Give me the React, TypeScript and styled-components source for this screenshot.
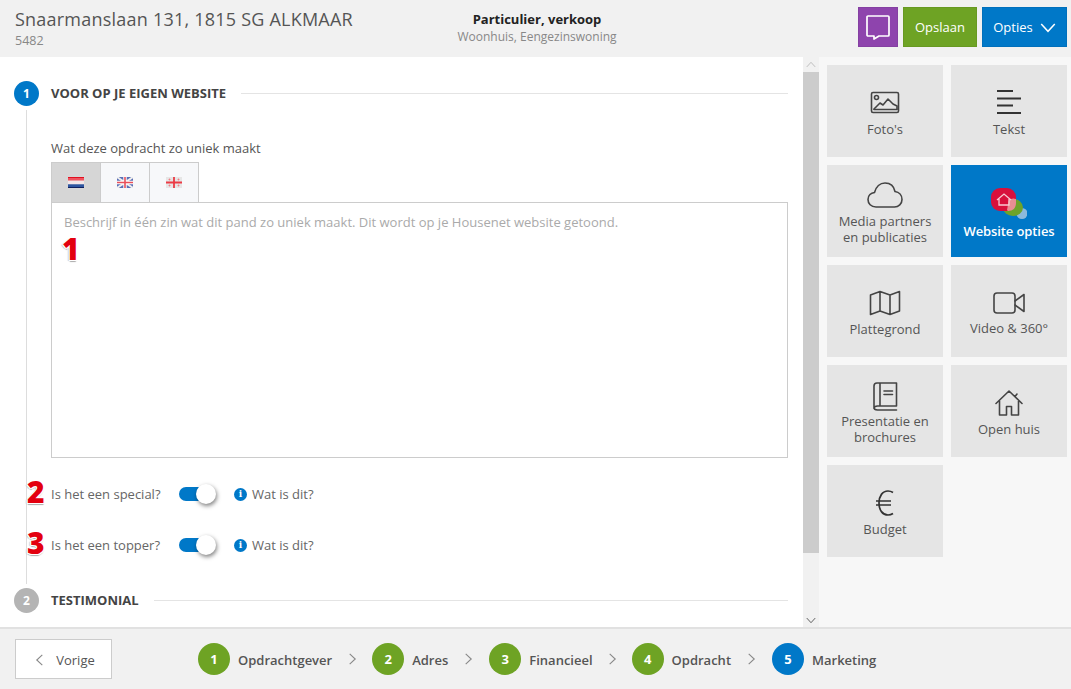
import React from 'react';
import styled, { createGlobalStyle } from 'styled-components';

const Global = createGlobalStyle`
  html, body { margin: 0; padding: 0; height: 100%; overflow: hidden; }
  body { font-family: "Open Sans", "Liberation Sans", sans-serif; color: #555; background: #fff; }
  * { box-sizing: border-box; }
`;

const Page = styled.div`display: flex; flex-direction: column; height: 689px; width: 1071px; position: relative; overflow: hidden;`;

const Header = styled.header`height: 57px; flex: none; background: #f1f1f1; display: grid; grid-template-columns: 1fr 1fr 1fr; padding: 7px 4px 0 15px;`;
const HeaderLeft = styled.div`display: flex; flex-direction: column;`;
const Address = styled.div`font-size: 18px; line-height: 24px; color: #555; letter-spacing: .22px; white-space: nowrap;`;
const RefNo = styled.div`font-size: 12.5px; line-height: 17px; color: #888; margin-top: 1px;`;
const HeaderCenter = styled.div`text-align: center; padding-top: 4px; margin-left: -8px;`;
const Kind = styled.div`font-size: 13px; font-weight: 700; line-height: 17px; color: #222;`;
const SubKind = styled.div`font-size: 12px; line-height: 17px; color: #888;`;
const HeaderRight = styled.div`display: flex; justify-content: flex-end; gap: 5px;`;
const HeadButton = styled.button<{ $bg: string; $w: number }>`
  width: ${p => p.$w}px; height: 40px; border: 1px solid rgba(0,0,0,.06); background: ${p => p.$bg}; color: #fff;
  font: 400 13px "Open Sans", sans-serif; padding: 0; display: flex; align-items: center; justify-content: center; gap: 7px;
`;

const Main = styled.main`flex: 1; display: flex; min-height: 0;`;
const Content = styled.section`width: 803px; flex: none; padding: 24px 15px 0 14px; overflow: hidden; background: #fff;`;
const StepHead = styled.div`display: flex; align-items: center; height: 25px;`;
const Bullet = styled.div<{ $bg: string }>`width: 25px; height: 25px; border-radius: 50%; background: ${p => p.$bg}; color: #fff; font-size: 12px; font-weight: 700; display: flex; align-items: center; justify-content: center; flex: none;`;
const StepTitle = styled.h2`margin: 0 15px 0 12px; padding-bottom: 2px; font-size: 13px; font-weight: 700; color: #444; white-space: nowrap;`;
const Rule = styled.div`flex: 1; height: 1px; background: #e4e4e4;`;
const StepBody = styled.div`margin: 4px 0 4px 12px; border-left: 1px solid #ddd; padding: 29px 0 27px 24px; height: 474px;`;
const FieldLabel = styled.div`font-size: 13px; line-height: 18px; color: #555; margin-bottom: 5px;`;
const Tabs = styled.div`display: flex; position: relative; z-index: 1;`;
const Tab = styled.div<{ $active?: boolean }>`
  width: 50px; height: 41px; border: 1px solid #ccc; margin-right: -1px; background: ${p => p.$active ? '#d6d6d6' : '#f7f8fa'};
  display: flex; align-items: center; justify-content: center;
`;
const TextBox = styled.textarea`
  display: block; width: 100%; height: 256px; margin: -1px 0 0; border: 1px solid #ccc; padding: 10px 12px; resize: none; outline: none;
  font: 400 13px/18px "Open Sans", sans-serif; background: #fff;
  &::placeholder { color: #aaa; opacity: 1; }
`;
const OptionRow = styled.div<{ $mt: number }>`display: flex; align-items: center; height: 24px; margin-top: ${p => p.$mt}px; font-size: 13px; color: #666;`;
const OptionLabel = styled.div`width: 128px; flex: none;`;
const Switch = styled.div`width: 26px; height: 14px; border-radius: 7px; background: #0078c8; position: relative; margin-right: 29px; flex: none;`;
const Knob = styled.div`position: absolute; left: 17px; top: -3px; width: 20px; height: 20px; border-radius: 50%; background: #fff; box-shadow: 1px 2px 4px rgba(0,0,0,.5);`;
const InfoDot = styled.div`width: 13px; height: 13px; border-radius: 50%; background: #0078c8; color: #fff; font: 700 9px/13px "DejaVu Serif", serif; text-align: center; margin-right: 5px; flex: none;`;

const Scroll = styled.div`width: 16px; flex: none; background: #f1f1f1; display: flex; flex-direction: column; align-items: center;`;
const ScrollArrow = styled.div`height: 15px; flex: none; display: flex; align-items: center; justify-content: center;`;
const Thumb = styled.div`width: 100%; height: 481px; background: #ccc; flex: none;`;
const ScrollTrack = styled.div`flex: 1;`;

const Side = styled.aside`flex: 1; background: #f7f7f7; padding: 8px 4px 0 8px; display: grid; grid-template-columns: 116px 116px; grid-auto-rows: 92px; gap: 8px;`;
const Tile = styled.div<{ $active?: boolean; $gap: number }>`
  background: ${p => p.$active ? '#0078c8' : '#e5e5e5'}; color: ${p => p.$active ? '#fff' : '#555'};
  font-size: 13px; line-height: 16px; font-weight: ${p => p.$active ? 600 : 400}; letter-spacing: ${p => p.$active ? '-.1px' : '0'}; text-align: center;
  display: flex; flex-direction: column; align-items: center; justify-content: center; padding: 5px 2px 0;
  svg { display: block; margin-bottom: ${p => p.$gap}px; }
`;

const Footer = styled.footer`height: 62px; flex: none; background: #f1f1f1; border-top: 2px solid #e1e1e1; display: flex; align-items: center; padding: 0 0 0 15px;`;
const PrevButton = styled.button`width: 97px; height: 40px; background: #fff; border: 1px solid #ccc; font: 400 13px "Open Sans", sans-serif; color: #555; display: flex; align-items: center; justify-content: center; gap: 10px; padding: 1px 0 0 2px; margin-right: 86px;`;
const StepItem = styled.div`display: flex; align-items: center; font-size: 13px; font-weight: 600; color: #555;`;
const StepText = styled.span`padding-top: 1px;`;
const StepDot = styled.div<{ $bg: string }>`width: 32px; height: 32px; border-radius: 50%; background: ${p => p.$bg}; color: #fff; font-size: 13px; font-weight: 700; display: flex; align-items: center; justify-content: center; margin-right: 8px;`;
const StepSep = styled.div<{ $l: number; $r: number }>`display: flex; margin: 0 ${p => p.$r}px 0 ${p => p.$l}px;`;

const Mark = styled.div<{ $x: number; $y: number }>`
  position: absolute; left: ${p => p.$x}px; top: ${p => p.$y}px; font: 800 30px/30px "Open Sans", sans-serif; color: #e3000f;
  text-shadow: 1px 0 #fff, -1px 0 #fff, 0 1px #fff, 0 -1px #fff, 1px 1px #fff, -1px 1px #fff, 0 2px 1px #aaa, -2px 1px 1px #ccc;
`;

const I = { fill: 'none', stroke: '#444', strokeWidth: 1.6, strokeLinecap: 'round', strokeLinejoin: 'round' } as const;

const Chevron = ({ dir = 'right', size = 12, color = '#888' }: { dir?: 'right' | 'left' | 'down' | 'up'; size?: number; color?: string }) => {
  const d = { right: 'M4 1l6 5.5L4 12', left: 'M9 1L3 6.5 9 12', down: 'M1 4l5.5 6L12 4', up: 'M1 9l5.5-6L12 9' }[dir];
  return <svg width={size} height={size} viewBox="0 0 13 13" fill="none" stroke={color} strokeWidth="1.2"><path d={d} /></svg>;
};

const NL = () => (
  <svg width="16" height="11" viewBox="0 0 16 11"><rect width="16" height="3.7" fill="#f0535f" /><rect y="3.7" width="16" height="3.6" fill="#f3e6e8" /><rect y="7.3" width="16" height="3.7" fill="#2d55a0" /><rect y="10" width="16" height="1" fill="#10205f" /><rect width="16" height="1" fill="#e01020" /></svg>
);
const UK = () => (
  <svg width="16" height="11" viewBox="0 0 16 11"><rect width="16" height="11" fill="#5a6fb5" /><path d="M0 0l16 11M16 0L0 11" stroke="#eee" strokeWidth="2" /><path d="M8 0v11M0 5.5h16" stroke="#fff" strokeWidth="3.4" /><path d="M8 0v11M0 5.5h16" stroke="#e8505a" strokeWidth="1.6" /></svg>
);
const GE = () => (
  <svg width="16" height="11" viewBox="0 0 16 11"><rect width="16" height="11" fill="#e6e6e6" /><path d="M8 0v11M0 5.5h16" stroke="#ec3b45" strokeWidth="1.8" /><path d="M3.5 1.5v2M2.5 2.5h2M12.5 1.5v2M11.5 2.5h2M3.5 7.500v2M2.5 8.5h2M12.5 7.500v2M11.5 8.5h2" stroke="#ef7a80" strokeWidth=".8" /></svg>
);

const PhotoIcon = () => (
  <svg width="30" height="23" viewBox="0 0 30 23" {...I}><rect x="1.5" y="1.5" width="27" height="20" rx="1.5" /><circle cx="6.5" cy="6.5" r="2" /><path d="M4 18l6-6 3 2 5-6 5 5 4 2v3" /><path d="M4 18.5h23" /></svg>
);
const TextIcon = () => (
  <svg width="24" height="24" viewBox="0 0 24 24" fill="none" stroke="#333" strokeWidth="1.8"><path d="M0 1h16M0 8.500h24M0 15.500h16M0 23h24" /></svg>
);
const CloudIcon = () => (
  <svg width="36" height="26" viewBox="0 0 36 26" {...I}><path d="M9 25C4 25 1 21.500 1 17.500S4 11 7.500 10.500C9 5 13 1 18 1c5.500 0 9 3.500 10 8.500 4 .5 7 3.500 7 8 0 4.500-3.500 7.500-7.500 7.500z" /></svg>
);
const MapIcon = () => (
  <svg width="32" height="26" viewBox="0 0 32 26" {...I}><path d="M1.500 5L11 1.500 21 5l9.500-3.500V21L21 24.500 11 21l-9.500 3.500zM11 1.500V21M21 5v19.500" /></svg>
);
const VideoIcon = () => (
  <svg width="32" height="22" viewBox="0 0 32 22" {...I}><rect x="1" y="1" width="21" height="20" rx="3" /><path d="M22 9l9-6.500v17L22 13" /></svg>
);
const BookIcon = () => (
  <svg width="25" height="29" viewBox="0 0 25 29" {...I}><path d="M4 1h19.500v23H4.500C2.500 24 1 25 1 26.500V4c0-2 1.500-3 3-3zM7 1v23M1 25.500C1 27 2.500 28 4.500 28h19" /><path d="M11 9h8.500M11 12.500h8.500" /></svg>
);
const HouseIcon = () => (
  <svg width="28" height="26" viewBox="0 0 28 26" {...I}><path d="M1 13.500L14 1l13 12.500M4.500 11v14h7v-8.500h5V25h7V11M20 6.500L22 4" /></svg>
);
const EuroIcon = () => (
  <svg width="18" height="26" viewBox="0 0 18 26" fill="none" stroke="#333" strokeWidth="1.7"><path d="M17 2.500C15.500 1.500 14 1 12 1 6.500 1 3 6 3 13s3.500 12 9 12c2 0 3.500-.5 5-1.500M0 11h15M0 15h15" /></svg>
);
const SiteLogo = () => (
  <svg width="36" height="31" viewBox="0 0 36 31">
    <circle cx="31" cy="25.500" r="5.500" fill="#8cb9dc" />
    <ellipse cx="22" cy="19.500" rx="10" ry="8.500" fill="#6ea32a" />
    <rect x="0" y="0" width="25" height="23" rx="9" fill="#d8103c" />
    <path d="M18 12a7 7 0 0 1 7-1v4c0 5-3 8-8 8a10 10 0 0 1-1-1c1-4 1-8 2-10z" fill="#e88e92" />
    <path d="M6 12l7-6 7 6M8 11v6h10v-6" fill="none" stroke="#f7c9d2" strokeWidth="1.300" />
  </svg>
);

const tiles: { label: React.ReactNode; icon: React.ReactNode; active?: boolean; gap: number }[] = [
  { label: "Foto's", icon: <PhotoIcon />, gap: 7 },
  { label: 'Tekst', icon: <TextIcon />, gap: 7 },
  { label: <>Media partners<br />en publicaties</>, icon: <CloudIcon />, gap: 5 },
  { label: 'Website opties', icon: <SiteLogo />, active: true, gap: 4 },
  { label: 'Plattegrond', icon: <MapIcon />, gap: 5 },
  { label: 'Video & 360°', icon: <VideoIcon />, gap: 6 },
  { label: <>Presentatie en<br />brochures</>, icon: <BookIcon />, gap: 2 },
  { label: 'Open huis', icon: <HouseIcon />, gap: 5 },
  { label: 'Budget', icon: <EuroIcon />, gap: 5 },
];

const steps = [
  { n: 1, label: 'Opdrachtgever', l: 14, r: 14 },
  { n: 2, label: 'Adres', l: 14, r: 15 },
  { n: 3, label: 'Financieel', l: 13, r: 14 },
  { n: 4, label: 'Opdracht', l: 14, r: 15 },
  { n: 5, label: 'Marketing', l: 0, r: 0 },
];

export default function App() {
  return (
    <Page>
      <Global />
      <Header>
        <HeaderLeft>
          <Address>Snaarmanslaan 131, 1815 SG ALKMAAR</Address>
          <RefNo>5482</RefNo>
        </HeaderLeft>
        <HeaderCenter>
          <Kind>Particulier, verkoop</Kind>
          <SubKind>Woonhuis, Eengezinswoning</SubKind>
        </HeaderCenter>
        <HeaderRight>
          <HeadButton $bg="#8e44ad" $w={40}>
            <svg width="26" height="26" viewBox="0 0 26 26" fill="none" stroke="#fff" strokeWidth="1.700" strokeLinejoin="round"><path d="M3 2h20a1 1 0 0 1 1 1v18a1 1 0 0 1-1 1h-9l-5 3v-3H3a1 1 0 0 1-1-1V3a1 1 0 0 1 1-1z" /></svg>
          </HeadButton>
          <HeadButton $bg="#6ea324" $w={74}>Opslaan</HeadButton>
          <HeadButton $bg="#0078c8" $w={85}>Opties <Chevron dir="down" size={16} color="#fff" /></HeadButton>
        </HeaderRight>
      </Header>
      <Main>
        <Content>
          <StepHead>
            <Bullet $bg="#0078c8">1</Bullet>
            <StepTitle>VOOR OP JE EIGEN WEBSITE</StepTitle>
            <Rule />
          </StepHead>
          <StepBody>
            <FieldLabel>Wat deze opdracht zo uniek maakt</FieldLabel>
            <Tabs>
              <Tab $active><NL /></Tab>
              <Tab><UK /></Tab>
              <Tab><GE /></Tab>
            </Tabs>
            <TextBox placeholder="Beschrijf in één zin wat dit pand zo uniek maakt. Dit wordt op je Housenet website getoond." />
            <OptionRow $mt={24}>
              <OptionLabel>Is het een special?</OptionLabel>
              <Switch><Knob /></Switch>
              <InfoDot>i</InfoDot>
              Wat is dit?
            </OptionRow>
            <OptionRow $mt={27}>
              <OptionLabel>Is het een topper?</OptionLabel>
              <Switch><Knob /></Switch>
              <InfoDot>i</InfoDot>
              Wat is dit?
            </OptionRow>
          </StepBody>
          <StepHead>
            <Bullet $bg="#b4b4b4">2</Bullet>
            <StepTitle>TESTIMONIAL</StepTitle>
            <Rule />
          </StepHead>
        </Content>
        <Scroll>
          <ScrollArrow><Chevron dir="up" size={10} color="#bbb" /></ScrollArrow>
          <Thumb />
          <ScrollTrack />
          <ScrollArrow><Chevron dir="down" size={10} color="#555" /></ScrollArrow>
        </Scroll>
        <Side>
          {tiles.map((t, i) => (
            <Tile key={i} $active={t.active} $gap={t.gap}>{t.icon}<div>{t.label}</div></Tile>
          ))}
        </Side>
      </Main>
      <Footer>
        <PrevButton><Chevron dir="left" size={12} /> Vorige</PrevButton>
        {steps.map(s => (
          <React.Fragment key={s.n}>
            <StepItem>
              <StepDot $bg={s.n === 5 ? '#0078c8' : '#6ea324'}>{s.n}</StepDot>
              <StepText>{s.label}</StepText>
            </StepItem>
            {s.n < 5 && <StepSep $l={s.l} $r={s.r}><Chevron /></StepSep>}
          </React.Fragment>
        ))}
      </Footer>
      <Mark $x={62} $y={234}>1</Mark>
      <Mark $x={27} $y={477}>2</Mark>
      <Mark $x={27} $y={528}>3</Mark>
    </Page>
  );
}
